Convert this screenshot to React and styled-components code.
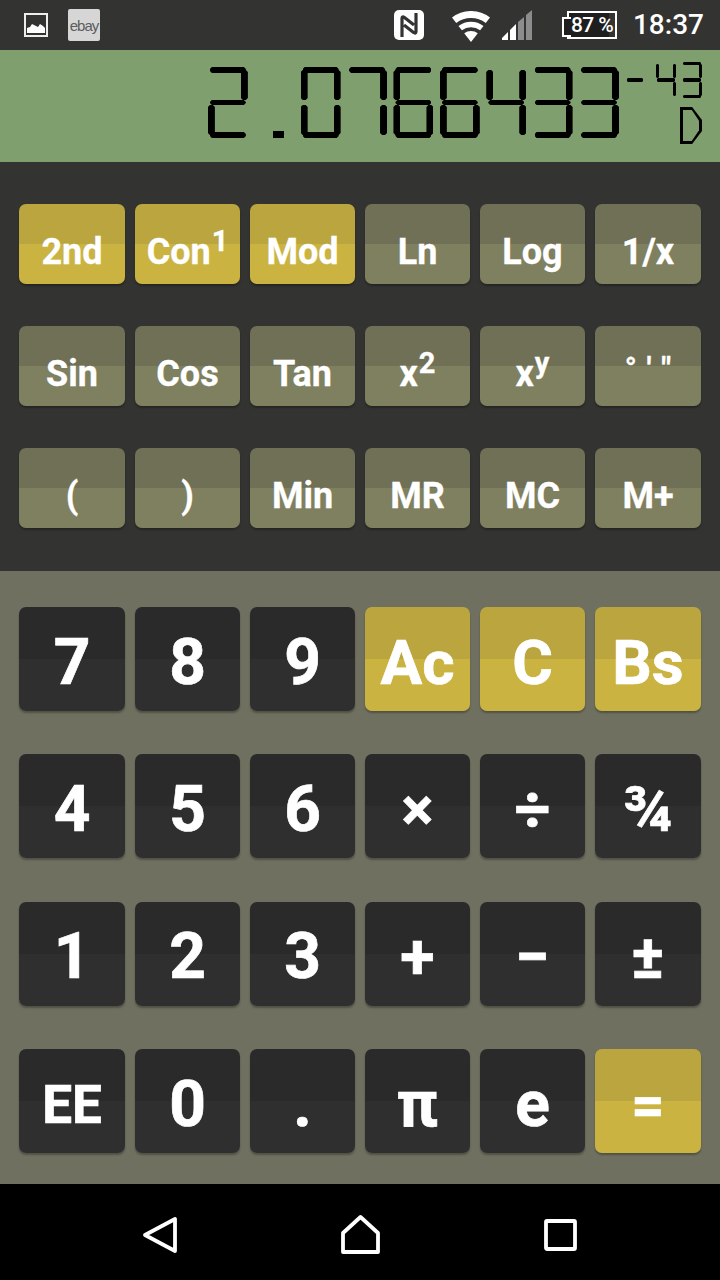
import React from 'react';
import styled, { createGlobalStyle, css } from 'styled-components';

const GlobalStyle = createGlobalStyle`
  html, body {
    margin: 0;
    padding: 0;
    background: #000;
  }
  * {
    box-sizing: border-box;
  }
`;

const Phone = styled.div`
  width: 720px;
  height: 1280px;
  display: flex;
  flex-direction: column;
  overflow: hidden;
  font-family: Roboto, 'Liberation Sans', sans-serif;
  color: #fff;
`;

/* status bar */
const StatusBar = styled.div`
  height: 50px;
  background: #333331;
  display: flex;
  align-items: center;
  justify-content: space-between;
  padding: 0 16px 0 24px;
`;

const StatusGroup = styled.div`
  display: flex;
  align-items: center;
`;

const PictureIcon = styled.svg`
  display: block;
  width: 24px;
  height: 24px;
  margin-right: 20px;
`;

const EbayTile = styled.div`
  width: 32px;
  height: 32px;
  background: #d6d6d6;
  border-radius: 2px;
  display: flex;
  align-items: center;
  justify-content: center;
  font-family: 'Liberation Sans', sans-serif;
  font-size: 15px;
  letter-spacing: -1px;
  color: #5c5c5c;
`;

const StatusIcon = styled.svg`
  display: block;
  flex: none;
  margin-right: ${(p) => p.$gap}px;
  margin-top: ${(p) => p.$drop || 0}px;
`;

const Battery = styled.div`
  position: relative;
  width: 50px;
  height: 28px;
  margin-left: 5px;
  margin-right: 16px;
  border: 2px solid #fff;
  background: linear-gradient(to right, #1e1e1e 87%, transparent 87%);
  font-size: 21px;
  font-weight: 500;
  letter-spacing: -0.6px;
  line-height: 24px;
  text-align: center;
  white-space: nowrap;

  &::before {
    content: '';
    position: absolute;
    left: -7px;
    top: 4px;
    width: 7px;
    height: 16px;
    background: #1e1e1e;
    border: 2px solid #fff;
    border-right: 0;
  }
`;

const Clock = styled.div`
  font-size: 28px;
  font-weight: 500;
  line-height: 34px;
`;

/* lcd */
const Lcd = styled.div`
  height: 112px;
  background: #7f9f6f;
  display: flex;
  justify-content: flex-end;
  padding-right: 18px;
`;

const MainDigits = styled.div`
  display: flex;
  gap: 6.4px;
  padding-top: 17px;
  margin-right: 7px;
`;

const Indicators = styled.div`
  display: flex;
  flex-direction: column;
  align-items: flex-end;
  gap: 9px;
  padding-top: 12px;
`;

const Exponent = styled.div`
  display: flex;
  gap: 6px;

  & > :first-child {
    width: 18px;
    margin-right: 6px;
  }
`;

const sizes = {
  large: { w: 40, h: 71, t: 7, b: 6, m: 5, inset: 2, c: 2 },
  small: { w: 20, h: 36, t: 3, b: 3, m: 4, inset: 1, c: 1 },
};

const DigitCell = styled.div`
  ${(p) => {
    const s = sizes[p.$size];
    return css`
      width: ${s.w}px;
      height: ${s.h}px;
      display: grid;
      grid-template-columns: ${s.t}px 1fr ${s.t}px;
      grid-template-rows: ${s.b}px 1fr ${s.m}px 1fr ${s.b}px;
    `;
  }}
`;

const segmentPlace = {
  a: 'grid-column: 1 / 4; grid-row: 1;',
  g: 'grid-column: 1 / 4; grid-row: 3;',
  d: 'grid-column: 1 / 4; grid-row: 5;',
  f: 'grid-column: 1; grid-row: 1 / 3;',
  b: 'grid-column: 3; grid-row: 1 / 3;',
  e: 'grid-column: 1; grid-row: 4 / 6;',
  c: 'grid-column: 3; grid-row: 4 / 6;',
};

const Segment = styled.div`
  background: #000;
  ${(p) => segmentPlace[p.$name]}
  ${(p) => {
    const { inset, c } = sizes[p.$size];
    const corners = `polygon(${c}px 0, calc(100% - ${c}px) 0, 100% ${c}px, 100% calc(100% - ${c}px), calc(100% - ${c}px) 100%, ${c}px 100%, 0 calc(100% - ${c}px), 0 ${c}px)`;
    if ('agd'.includes(p.$name)) {
      return css`
        margin: 0 ${inset}px;
        clip-path: ${corners};
      `;
    }
    const top = 'fb'.includes(p.$name);
    return css`
      margin: ${top ? `${inset + 1}px 0 0` : `0 0 ${inset + 1}px`};
      clip-path: ${corners};
    `;
  }}
`;

const DecimalCell = styled.div`
  width: 40px;
  height: 71px;
  display: flex;
  align-items: flex-end;
  justify-content: center;
  padding-left: 9px;
`;

const DecimalDot = styled.div`
  width: 11px;
  height: 7px;
  background: #000;
`;

const ModeLetter = styled.div`
  position: relative;
  width: 22px;
  height: 37px;
  background: #000;
  clip-path: polygon(0 0, 55% 0, 100% 35%, 100% 65%, 55% 100%, 0 100%);

  &::after {
    content: '';
    position: absolute;
    inset: 3px;
    background: #7f9f6f;
    clip-path: polygon(0 0, 55% 0, 100% 35%, 100% 65%, 55% 100%, 0 100%);
  }
`;

const digitSegments = {
  0: 'abcdef',
  2: 'abged',
  3: 'abgcd',
  4: 'fgbc',
  6: 'afedcg',
  7: 'abc',
  '-': 'g',
};

const Digit = ({ value, size = 'large' }) => (
  <DigitCell $size={size}>
    {digitSegments[value].split('').map((name) => (
      <Segment key={name} $name={name} $size={size} />
    ))}
  </DigitCell>
);

/* keys */
const columns = '106px 105px 105px 105px 105px 106px';

const SciPanel = styled.div`
  height: 409px;
  background: #333331;
  padding: 42px 19px 0;
  display: grid;
  grid-template-columns: ${columns};
  grid-auto-rows: 80px;
  gap: 42px 10px;
`;

const NumPanel = styled.div`
  height: 613px;
  background: #6f705f;
  padding: 36px 19px 0;
  display: grid;
  grid-template-columns: ${columns};
  grid-auto-rows: 104px;
  gap: 43.4px 10px;
`;

const tones = {
  gold: ['#baa53f', '#cbb342'],
  olive: ['#6f7055', '#7f805f'],
  dark: ['#2a2a2a', '#2f2f2f'],
};

const Key = styled.div`
  display: flex;
  align-items: center;
  justify-content: center;
  border-radius: 7px;
  font-weight: 700;
  white-space: nowrap;
  background: linear-gradient(
    to bottom,
    ${(p) => tones[p.$tone][0]} 50%,
    ${(p) => tones[p.$tone][1]} 50%
  );
  box-shadow: 0 2px 2px rgba(0, 0, 0, 0.28);
`;

const SciKey = styled(Key)`
  font-size: 36px;
  line-height: 40px;
  padding-top: 15px;
  -webkit-text-stroke: 0.3px #fff;
`;

const NumKey = styled(Key)`
  font-size: ${(p) => p.$font || 64}px;
  line-height: 74px;
  padding-top: 7px;
  -webkit-text-stroke: 0.7px #fff;
`;

const Raised = styled.sup`
  font-size: 29px;
  font-weight: 700;
  line-height: 0;
  vertical-align: 13px;
  margin-left: 1px;
`;

const Marks = styled.span`
  font-size: 31px;
  word-spacing: 2px;
  position: relative;
  top: -5px;
`;

const NavBar = styled.div`
  flex: 1;
  background: #000;
  padding: 0 60px;
  display: grid;
  grid-template-columns: repeat(3, 1fr);
  align-items: center;
  justify-items: center;
`;

const NavIcon = styled.svg`
  display: block;
  width: 44px;
  height: 44px;
  fill: none;
  stroke: #fff;
  stroke-width: 3.8;
  stroke-linejoin: round;
`;

const sciKeys = [
  { label: '2nd', tone: 'gold' },
  { label: 'Con', sup: '1', tone: 'gold' },
  { label: 'Mod', tone: 'gold' },
  { label: 'Ln' },
  { label: 'Log' },
  { label: '1/x' },
  { label: 'Sin' },
  { label: 'Cos' },
  { label: 'Tan' },
  { label: 'x', sup: '2' },
  { label: 'x', sup: 'y' },
  { marks: '° \' "' },
  { label: '(' },
  { label: ')' },
  { label: 'Min' },
  { label: 'MR' },
  { label: 'MC' },
  { label: 'M+' },
];

const numKeys = [
  { label: '7' },
  { label: '8' },
  { label: '9' },
  { label: 'Ac', tone: 'gold', font: 62 },
  { label: 'C', tone: 'gold', font: 62 },
  { label: 'Bs', tone: 'gold', font: 62 },
  { label: '4' },
  { label: '5' },
  { label: '6' },
  { label: '×', font: 60 },
  { label: '÷', font: 63 },
  { label: '¾', font: 63 },
  { label: '1' },
  { label: '2' },
  { label: '3' },
  { label: '+', font: 63 },
  { label: '−', font: 62 },
  { label: '±', font: 62 },
  { label: 'EE', font: 53 },
  { label: '0' },
  { label: '.' },
  { label: 'π' },
  { label: 'e' },
  { label: '=', tone: 'gold', font: 58 },
];

const mantissa = ['2', '.', '0', '7', '6', '6', '4', '3', '3'];

export default function App() {
  return (
    <Phone>
      <GlobalStyle />
      <StatusBar>
        <StatusGroup>
          <PictureIcon viewBox="0 0 24 24">
            <rect x="1" y="1" width="22" height="22" fill="none" stroke="#eee" strokeWidth="2" />
            <path d="M3 20v-5l3-1 2-3 4 2 2 1 2-3 3 2 2 2v5z" fill="#fff" />
          </PictureIcon>
          <EbayTile>ebay</EbayTile>
        </StatusGroup>
        <StatusGroup>
          <StatusIcon $gap={28} width="30" height="30" viewBox="0 0 30 30">
            <rect width="30" height="30" rx="5" fill="#fff" />
            <path
              d="M8 27V8.5Q8 6 10.5 7.5L20 15M22 3V21.5Q22 24 19.5 22.5L10 15"
              fill="none"
              stroke="#333331"
              strokeWidth="3.2"
            />
          </StatusIcon>
          <StatusIcon $gap={12} $drop={3} width="38" height="32" viewBox="0 0 38 32">
            <path d="M2.1 9.3A27.5 27.5 0 0 1 35.9 9.3" fill="none" stroke="#fff" strokeWidth="7" />
            <path d="M8.2 17.2A17.5 17.5 0 0 1 29.8 17.2" fill="none" stroke="#fff" strokeWidth="5.5" />
            <path d="M19 31L12.2 22.3A11 11 0 0 1 25.8 22.3Z" fill="#fff" />
          </StatusIcon>
          <StatusIcon $gap={29} width="31" height="30" viewBox="0 0 31 30">
            <path d="M0 30V28L6 22V30Z" fill="#fff" />
            <path d="M8 30V20L14 14V30Z" fill="#fff" />
            <path d="M16 30V12L22 7V30Z" fill="#8c8c8c" />
            <path d="M24 30V5L30 0V30Z" fill="#8c8c8c" />
          </StatusIcon>
          <Battery>87 %</Battery>
          <Clock>18:37</Clock>
        </StatusGroup>
      </StatusBar>

      <Lcd role="img" aria-label="2.0766433 times ten to the minus 43, degrees mode">
        <MainDigits>
          {mantissa.map((ch, i) =>
            ch === '.' ? (
              <DecimalCell key={i}>
                <DecimalDot />
              </DecimalCell>
            ) : (
              <Digit key={i} value={ch} />
            )
          )}
        </MainDigits>
        <Indicators>
          <Exponent>
            <Digit value="-" size="small" />
            <Digit value="4" size="small" />
            <Digit value="3" size="small" />
          </Exponent>
          <ModeLetter />
        </Indicators>
      </Lcd>

      <SciPanel>
        {sciKeys.map((k, i) => (
          <SciKey key={i} $tone={k.tone || 'olive'}>
            {k.marks ? (
              <Marks>{k.marks}</Marks>
            ) : (
              <span>
                {k.label}
                {k.sup && <Raised>{k.sup}</Raised>}
              </span>
            )}
          </SciKey>
        ))}
      </SciPanel>

      <NumPanel>
        {numKeys.map((k, i) => (
          <NumKey key={i} $tone={k.tone || 'dark'} $font={k.font}>
            {k.label}
          </NumKey>
        ))}
      </NumPanel>

      <NavBar>
        <NavIcon viewBox="0 0 44 44">
          <path d="M7 25L37 9V41Z" />
        </NavIcon>
        <NavIcon viewBox="0 0 44 44">
          <path d="M22.5 7L40 23V42H5V23Z" />
        </NavIcon>
        <NavIcon viewBox="0 0 44 44">
          <rect x="8" y="11" width="29" height="28" rx="1" />
        </NavIcon>
      </NavBar>
    </Phone>
  );
}
